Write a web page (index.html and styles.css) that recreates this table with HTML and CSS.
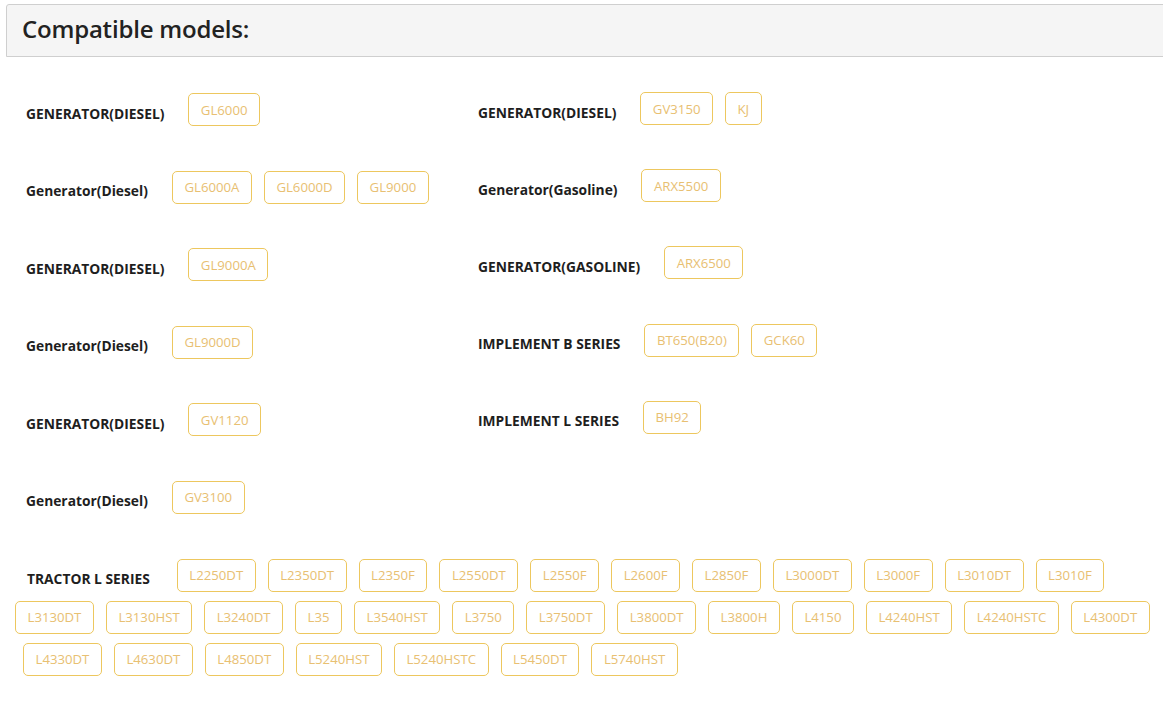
FILE: index.html
```html
<!DOCTYPE html>
<html>
<head>
<meta charset="utf-8">
<link rel="stylesheet" href="styles.css">
</head>
<body>
<div class="page">
  <div class="panel-head"><h2 class="title">Compatible models:</h2></div>
  <div class="cols">
    <div class="col col-left">
      <div class="row"><span class="label">GENERATOR(DIESEL)</span><span class="chip">GL6000</span></div>
      <div class="row"><span class="label">Generator(Diesel)</span><span class="chip">GL6000A</span><span class="chip">GL6000D</span><span class="chip">GL9000</span></div>
      <div class="row"><span class="label">GENERATOR(DIESEL)</span><span class="chip">GL9000A</span></div>
      <div class="row"><span class="label">Generator(Diesel)</span><span class="chip">GL9000D</span></div>
      <div class="row"><span class="label">GENERATOR(DIESEL)</span><span class="chip">GV1120</span></div>
      <div class="row"><span class="label">Generator(Diesel)</span><span class="chip">GV3100</span></div>
    </div>
    <div class="col col-right">
      <div class="row"><span class="label">GENERATOR(DIESEL)</span><span class="chip">GV3150</span><span class="chip">KJ</span></div>
      <div class="row"><span class="label">Generator(Gasoline)</span><span class="chip">ARX5500</span></div>
      <div class="row"><span class="label">GENERATOR(GASOLINE)</span><span class="chip">ARX6500</span></div>
      <div class="row"><span class="label">IMPLEMENT B SERIES</span><span class="chip">BT650(B20)</span><span class="chip">GCK60</span></div>
      <div class="row"><span class="label">IMPLEMENT L SERIES</span><span class="chip">BH92</span></div>
    </div>
  </div>
  <div class="tractor">
    <span class="label tlabel">TRACTOR L SERIES</span>
    <span class="chip">L2250DT</span><span class="chip">L2350DT</span><span class="chip">L2350F</span><span class="chip">L2550DT</span><span class="chip">L2550F</span><span class="chip">L2600F</span><span class="chip">L2850F</span><span class="chip">L3000DT</span><span class="chip">L3000F</span><span class="chip">L3010DT</span><span class="chip">L3010F</span><span class="chip">L3130DT</span><span class="chip">L3130HST</span><span class="chip">L3240DT</span><span class="chip">L35</span><span class="chip">L3540HST</span><span class="chip">L3750</span><span class="chip">L3750DT</span><span class="chip">L3800DT</span><span class="chip">L3800H</span><span class="chip">L4150</span><span class="chip">L4240HST</span><span class="chip">L4240HSTC</span><span class="chip">L4300DT</span><span class="chip row3">L4330DT</span><span class="chip">L4630DT</span><span class="chip">L4850DT</span><span class="chip">L5240HST</span><span class="chip">L5240HSTC</span><span class="chip">L5450DT</span><span class="chip">L5740HST</span>
  </div>
</div>
</body>
</html>
```

FILE: styles.css
```css
html, body {
  margin: 0;
  padding: 0;
  background: #ffffff;
  overflow: hidden;
}
body {
  font-family: "Open Sans", "Noto Sans", sans-serif;
  color: #222;
}
.page {
  padding: 4px 0 0 6px;
  width: 1163px;
  box-sizing: border-box;
}
.panel-head {
  box-sizing: border-box;
  height: 53px;
  margin-right: -20px;
  background: #f5f5f5;
  border: 1px solid #cfcfcf;
  border-radius: 3px 0 0 0;
  display: flex;
  align-items: center;
  padding: 0 0 5px 15px;
}
.title {
  margin: 0;
  font-size: 24px;
  font-weight: 600;
  color: #222;
  letter-spacing: -0.2px;
}
.cols {
  display: flex;
  padding-top: 36px;
}
.col {
  display: flex;
  flex-direction: column;
}
.col-left {
  width: 452px;
  padding-left: 20px;
  gap: 44.6px;
}
.col-right {
  margin-top: -1px;
  gap: 44.2px;
}
.row {
  display: flex;
  align-items: center;
  gap: 12px;
  height: 33px;
}
.label {
  font-size: 13.8px;
  font-weight: 700;
  color: #1e1e1e;
  margin-right: 12px;
  padding-top: 7px;
  white-space: nowrap;
}
.chip {
  box-sizing: border-box;
  display: inline-flex;
  align-items: center;
  height: 33px;
  padding: 0 11.5px;
  border: 1px solid #edc75e;
  border-radius: 5px;
  font-size: 13.2px;
  color: #e8c072;
  white-space: nowrap;
  background: #fff;
}
.tractor {
  display: flex;
  flex-wrap: wrap;
  align-items: center;
  column-gap: 12px;
  row-gap: 9px;
  padding: 45px 0 0 9px;
  width: 1150px;
  box-sizing: border-box;
}
.tlabel {
  margin-left: 12px;
  margin-right: 15px;
}
.row3 {
  margin-left: 8px;
}
```
